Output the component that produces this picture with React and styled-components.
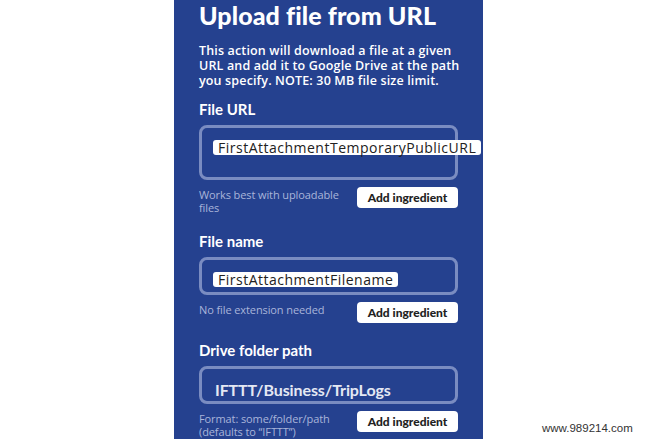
import React from 'react';
import styled, {createGlobalStyle} from 'styled-components';

const color = {
    panel: '#25418f',
    fieldBorder: '#7a8cc1',
    hint: '#a9b5da',
    white: '#ffffff',
    dark: '#222222',
};

const GlobalStyle = createGlobalStyle`
    html, body {
        margin: 0;
        padding: 0;
        background: #ffffff;
    }
    body {
        font-family: Lato, "Open Sans", sans-serif;
    }
`;

const Page = styled('div')`
    position: relative;
    width: 647px;
    height: 439px;
    overflow: hidden;
    display: flex;
`;

const Panel = styled('div')`
    margin-left: 174px;
    width: 309px;
    height: 100%;
    background: ${color.panel};
    padding: 0 0 0 25px;
    box-sizing: border-box;
    display: flex;
    flex-direction: column;
    color: ${color.white};
`;

const Title = styled('h1')`
    margin: 0;
    font-size: 25px;
    line-height: 30px;
    font-weight: 900;
    letter-spacing: 0.1px;
`;

const Description = styled('p')`
    margin: 13px 0 0;
    white-space: nowrap;
    font-family: "Open Sans", Lato, sans-serif;
    font-size: 12.5px;
    line-height: 15px;
    font-weight: 600;
    letter-spacing: 0.15px;
`;

const Field = styled('div')`
    display: flex;
    flex-direction: column;
    width: 259px;
    margin-top: ${p => p.$first ? '12px' : '18px'};
`;

const Label = styled('label')`
    font-size: 15px;
    line-height: 18px;
    font-weight: 700;
`;

const Box = styled('div')`
    margin-top: 7px;
    height: ${p => p.$tall ? '55px' : '38px'};
    box-sizing: border-box;
    border: 3px solid ${color.fieldBorder};
    border-radius: 8px;
    padding: 9px 0 0 11px;
    overflow: visible;
`;

const Pill = styled('span')`
    display: inline-block;
    white-space: nowrap;
    background: ${color.white};
    color: ${color.dark};
    border-radius: 3px;
    padding: 0 5px;
    font-family: "Open Sans", Lato, sans-serif;
    font-size: 14px;
    line-height: 15px;
    letter-spacing: 0.5px;
`;

const PlainValue = styled('div')`
    margin: 2px 0 0 2px;
    font-size: 16px;
    line-height: 20px;
    font-weight: 700;
    letter-spacing: -0.1px;
    color: #e4e8f3;
`;

const Footer = styled('div')`
    margin-top: 7px;
    display: flex;
    justify-content: space-between;
    align-items: flex-start;
`;

const Hint = styled('div')`
    width: 152px;
    font-family: "Open Sans", Lato, sans-serif;
    font-size: 11px;
    line-height: 13px;
    letter-spacing: -0.1px;
    color: ${color.hint};
    padding-top: 1px;
`;

const AddButton = styled('button')`
    width: 101px;
    height: 21px;
    border: none;
    border-radius: 4px;
    background: ${color.white};
    color: ${color.dark};
    font-family: Lato, "Open Sans", sans-serif;
    font-size: 12px;
    font-weight: 900;
    padding: 0;
    flex-shrink: 0;
`;

const Watermark = styled('div')`
    position: absolute;
    left: 542px;
    top: 421px;
    font-family: "Liberation Sans", Arial, sans-serif;
    font-size: 11.5px;
    line-height: 14px;
    color: #333333;
`;

const Section = ({label, first, tall, children, hint}) => (
    <Field $first={first}>
        <Label>{label}</Label>
        <Box $tall={tall}>{children}</Box>
        <Footer>
            <Hint>{hint}</Hint>
            <AddButton>Add ingredient</AddButton>
        </Footer>
    </Field>
);

const App = () => {
    return (
        <Page>
            <GlobalStyle/>
            <Panel>
                <Title>Upload file from URL</Title>
                <Description>
                    This action will download a file at a given<br/>
                    URL and add it to Google Drive at the path<br/>
                    you specify. NOTE: 30 MB file size limit.
                </Description>
                <Section label={"File URL"} first tall hint={"Works best with uploadable files"}>
                    <Pill>FirstAttachmentTemporaryPublicURL</Pill>
                </Section>
                <Section label={"File name"} hint={"No file extension needed"}>
                    <Pill>FirstAttachmentFilename</Pill>
                </Section>
                <Section label={"Drive folder path"} hint={"Format: some/folder/path (defaults to \u201cIFTTT\u201d)"}>
                    <PlainValue>IFTTT/Business/TripLogs</PlainValue>
                </Section>
            </Panel>
            <Watermark>www.989214.com</Watermark>
        </Page>
    );
};

export default App;
